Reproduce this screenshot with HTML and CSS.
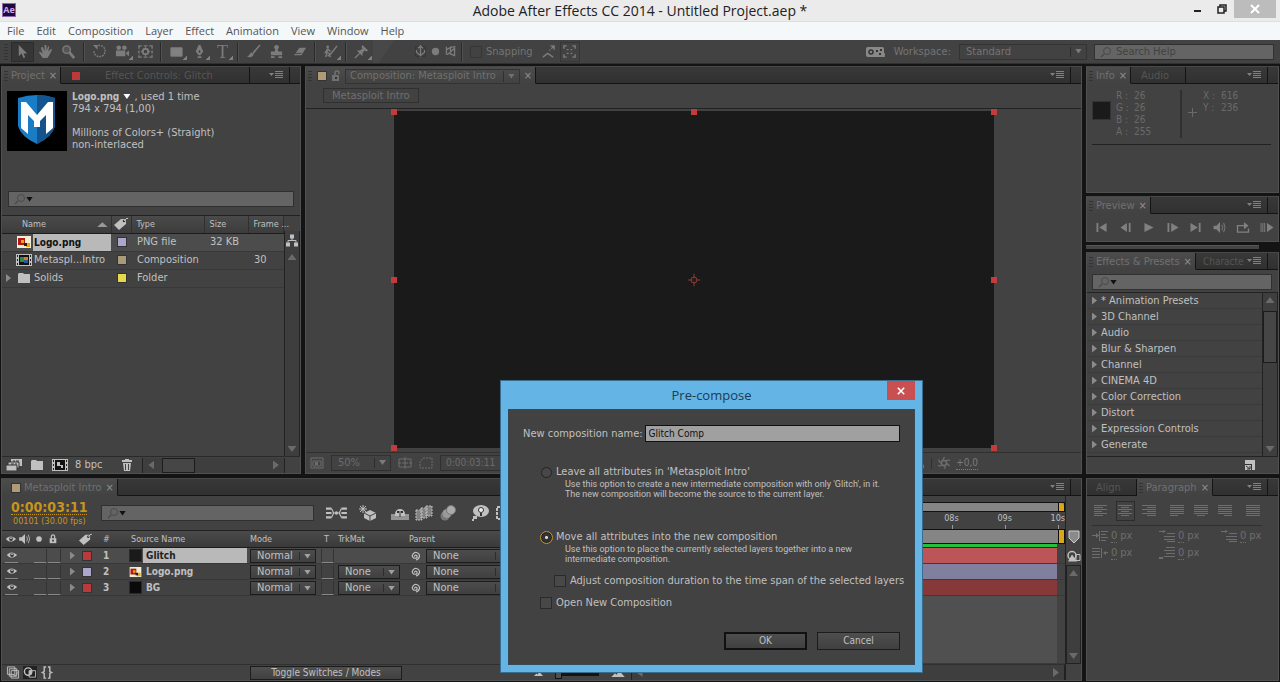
FILE: index.html
```
<!DOCTYPE html>
<html lang="en">
<head>
    <meta charset="UTF-8">
    <title>Adobe After Effects CC 2014 - Untitled Project.aep *</title>
    <link rel="stylesheet" href="styles.css">
</head>
<body>
    <svg class="defs" aria-hidden="true">
        <symbol id="arrow" viewBox="0 0 16 16"><path d="M4 1v12l3-3 2 5 2-1-2-4h4z"/></symbol>
        <symbol id="hand" viewBox="0 0 16 16"><path d="M5 15 1 9l1-1 3 2-2-6 2-1 2 5V1h2v6l2-5 1 1-1 5 3-3 1 1-3 6-2 3z"/></symbol>
        <symbol id="zoom" viewBox="0 0 16 16"><circle cx="6" cy="6" r="4" fill="#555" stroke="currentColor" stroke-width="1.5"/><path d="m9 9 5 6" stroke="currentColor" stroke-width="3"/></symbol>
        <symbol id="rotate" viewBox="0 0 16 16"><path d="M4 3a6 6 0 1 1-2 4" fill="none" stroke="currentColor" stroke-width="1.5" stroke-dasharray="2 1"/><path d="M1 1h5v5z"/></symbol>
        <symbol id="camera" viewBox="0 0 16 16"><circle cx="4" cy="4" r="2.5"/><circle cx="10" cy="4" r="2.5"/><path d="M1 7h10v6H1zm11 2 3-2v6l-3-2z"/></symbol>
        <symbol id="pan" viewBox="0 0 16 16"><path d="M1 5V2h3m2 0h4m2 0h3v3m0 2v3m0 2v2h-3m-2 0H6m-2 0H1v-2m0-2V7" fill="none" stroke="currentColor" stroke-width="1.5"/><circle cx="8" cy="8" r="3" fill="none" stroke="currentColor" stroke-width="2"/><path d="M8 3v3m0 4v3M3 8h3m4 0h3" stroke="currentColor"/></symbol>
        <symbol id="rect" viewBox="0 0 16 16"><path d="M2 4h12v9H2z" fill="#818181" stroke="currentColor"/></symbol>
        <symbol id="pen" viewBox="0 0 16 16"><path d="M7 1h2l3 7-3 4H7L4 8zM6 13h4v2H6z"/><circle cx="8" cy="8" r="1" fill="#333"/></symbol>
        <symbol id="brush" viewBox="0 0 16 16"><path d="m15 1-8 8 1 2zM6 9c-2 0-2 4-5 4 3 2 7 1 7-2z"/><path d="m15 1-7 8" stroke="currentColor" stroke-width="1.5"/></symbol>
        <symbol id="stamp" viewBox="0 0 16 16"><circle cx="8" cy="3.5" r="2.5"/><path d="M7 5h2l1 3h4v4H2V8h4zM2 13h4v2H2zm8 0h4v2h-4z"/></symbol>
        <symbol id="eraser" viewBox="0 0 16 16"><path d="M8 4h7l-5 8H2z"/><path d="M3 10h7" stroke="#444"/></symbol>
        <symbol id="roto" viewBox="0 0 16 16"><circle cx="5" cy="3" r="1.5"/><path d="m5 5-3 5m3-5 3 3M5 7l-2 7m3-5 2 5M15 2 8 11l-3 2" fill="none" stroke="currentColor" stroke-width="1.6"/></symbol>
        <symbol id="pin" viewBox="0 0 16 16"><path d="m9 1 6 6-2 1-2-1-2 3v3L3 7h3l3-2-1-2z"/><path d="m6 10-5 5" stroke="currentColor" stroke-width="1.5"/></symbol>
        <symbol id="axis" viewBox="0 0 16 16"><path d="M2 2h12v12H2z" fill="none" stroke="#333"/><path d="M8 1v13M3 6v3l5 4 5-4V6M5 4l3-3 3 3" fill="none" stroke="currentColor" stroke-width="1.5"/></symbol>
        <symbol id="ball" viewBox="0 0 16 16"><circle cx="8" cy="8" r="4.5"/></symbol>
        <symbol id="view" viewBox="0 0 16 16"><path d="M3 2v10m0-6 5-3v8l5 2V4L4 12M8 3l6-1" fill="none" stroke="currentColor" stroke-width="1.6"/></symbol>
        <symbol id="snap" viewBox="0 0 16 16"><path d="m2 14 5-4 6 4M9 7l1-1m1-1 3-3m-4 0h4v4" fill="none" stroke="currentColor" stroke-width="1.5"/></symbol>
        <symbol id="corners" viewBox="0 0 16 16"><path d="M2 5V2h3m6 0h3v3m0 6v3h-3m-6 0H2v-3M5 6h2m2 0h2M5 10h2m2 0h2" fill="none" stroke="currentColor" stroke-width="1.5"/></symbol>
        <symbol id="pad" viewBox="0 0 20 14"><rect x="1" y="2" width="18" height="10" rx="2"/><circle cx="6" cy="7" r="2" fill="none" stroke="#333" stroke-width="1.5"/><path d="M11 5h2v2h-2zm3 3h2v2h-2zm1-4h2v2h-2z" fill="#333"/></symbol>
        <symbol id="search" viewBox="0 0 12 12"><circle cx="7" cy="5" r="3.5" fill="none" stroke="currentColor"/><path d="m4 8-3 3" stroke="currentColor" stroke-width="1.5"/></symbol>
        <symbol id="list" viewBox="0 0 14 8"><path d="M0 2h5L2.500 5zM6 0h8v1H6zm0 2h8v1H6zm0 2h8v1H6zm0 2h8v1H6z"/></symbol>
        <symbol id="lock" viewBox="0 0 12 12"><path d="M2 5h8v6H2z"/><path d="M4 5V3a2 2 0 0 1 4 0v2" fill="none" stroke="currentColor" stroke-width="1.5"/><path d="M5 7h2v2H5z" fill="#333"/></symbol>
        <symbol id="unlock" viewBox="0 0 12 12"><path d="M2 5h7v6H2z"/><path d="M5 5V3a2 2 0 0 1 4 0v1" fill="none" stroke="currentColor" stroke-width="1.5"/><path d="M5 7h2v2H5z" fill="#333"/></symbol>
        <symbol id="tag" viewBox="0 0 16 14"><path d="m1 8 7-6h5v5l-7 6z"/><circle cx="11" cy="4" r="1.3" fill="#333"/><path d="m11 4 3-3 1 1" fill="none" stroke="currentColor"/></symbol>
        <symbol id="png" viewBox="0 0 14 12"><path fill="#f2ecd8" d="M0 0h14v12H0z"/><path fill="#b01c10" d="M1 2h7v7H1z"/><path fill="#e8a317" d="M4 4h3v3H4zm5 3h4v4H9z"/><path fill="#222" d="M7 7h3v3H7z"/></symbol>
        <symbol id="film" viewBox="0 0 16 12"><path d="M0 0h3v12H0zm13 0h3v12h-3zM3 0h10v1H3zm0 11h10v1H3z"/><path d="M1 1h1v2H1zm0 4h1v2H1zm0 4h1v2H1zm13-8h1v2h-1zm0 4h1v2h-1zm0 4h1v2h-1z" fill="#222"/><path fill="#111" d="M3 1h10v10H3z"/></symbol>
        <symbol id="folder" viewBox="0 0 14 12"><path d="M1 2 2 1h4l1 1h6v9H1z"/></symbol>
        <symbol id="tree" viewBox="0 0 14 14"><path d="M5 1h4v4H5zM1 9h4v4H1zm8 0h4v4H9z"/><path d="M7 4v3M3 9V7h8v2" fill="none" stroke="currentColor"/></symbol>
        <symbol id="footage" viewBox="0 0 16 12"><path d="M5 0h11v7H5z"/><path d="M2 3h11v6H2z" stroke="#333"/><path d="M0 6h11v6H0z" stroke="#333"/><path d="M7 2h2m1 0h3M5 5h3m1 0h2" stroke="#333"/></symbol>
        <symbol id="trash" viewBox="0 0 12 14"><path d="M1 2h10v2H1zm3-1h4v1H4zM2 5h8l-1 8H3z"/><path d="M4.500 6v6m3-6v6" stroke="#444"/></symbol>
        <symbol id="eye" viewBox="0 0 14 10"><path d="M1 5c3-4 8-4 12 0-4 4-9 4-12 0z"/><circle cx="7" cy="5" r="2.2" fill="#333"/><circle cx="7" cy="4" r="1"/></symbol>
        <symbol id="speaker" viewBox="0 0 14 12"><path d="M0 4h3l4-4v12L3 8H0z"/><path d="M9 3q2 3 0 6m2-8q3 5 0 10" fill="none" stroke="currentColor"/></symbol>
        <symbol id="spiral" viewBox="0 0 12 12"><path d="M6 6.500c-1-1 1-2 2-.5 1 2-2 3-4 1.500C2 5 5 2 7.500 2.500 12 4 11 9 7 10" fill="none" stroke="currentColor" stroke-width="1.2"/></symbol>
        <symbol id="flow" viewBox="0 0 20 14"><path d="M0 2h5v2H0zm0 4h5v2H0zm0 4h5v2H0zm14-8h5v2h-5zm0 4h5v2h-5zm0 4h5v2h-5z"/><path d="m5 3 2 4-2 4M6 7h7m1-4-2 4 2 4" fill="none" stroke="currentColor"/><circle cx="9.500" cy="7" r="1.5"/></symbol>
        <symbol id="cube" viewBox="0 0 18 16"><path d="m11 5 6 3v5l-6 3-6-3V8z"/><path d="M4 0v8M0 4h8M1 1l6 6m0-6L1 7" stroke="currentColor"/><path d="m5 8 6 3 6-3m-6 3v5" fill="none" stroke="#444"/></symbol>
        <symbol id="shy" viewBox="0 0 18 14"><path d="M0 8h18v6H0z" opacity=".65"/><path d="M4 8a5 5 0 0 1 10 0v2H4z"/><path d="M6 5h2v2H6zm4 0h2v2h-2zM8.500 5h1v6h-1z" fill="#333"/></symbol>
        <symbol id="blend" viewBox="0 0 18 16"><path d="M1 5h6v10H1zm5-2h6v10H6zm5-2h6v10h-6z" opacity=".5"/><path d="M1 5h6v10H1zm5-2h6v10H6zm5-2h6v10h-6z" fill="none" stroke="currentColor" stroke-dasharray="2 1"/></symbol>
        <symbol id="blur" viewBox="0 0 18 16"><circle cx="6" cy="11" r="4.5" fill="#777"/><circle cx="8" cy="8.500" r="4.5" fill="#999"/><circle cx="12" cy="5" r="4.5" fill="#aaa" stroke="#777"/></symbol>
        <symbol id="brain" viewBox="0 0 18 16"><ellipse cx="10" cy="6" rx="8" ry="6"/><path d="M2 11h4v3H2zm-1 3h2v2H1z"/><circle cx="10" cy="5" r="2.5" fill="#eee" stroke="#333"/><path d="M9 8h2v3H9z" fill="#333"/></symbol>
        <symbol id="graph" viewBox="0 0 18 16"><path d="M2 2h14v12H2z" fill="none" stroke="currentColor" stroke-dasharray="3 1" stroke-width="2"/></symbol>
        <symbol id="monitor" viewBox="0 0 14 12"><path d="M1 1h12v10H1z" fill="none" stroke="currentColor"/><path d="M3 4h8v5H3z" fill="none" stroke="currentColor"/><path d="M5 5h3v3H5z"/></symbol>
        <symbol id="grid" viewBox="0 0 14 12"><path d="M1 2h12v8H1zM7 0v12M4 6h6M0 6h3m8 0h3" fill="none" stroke="currentColor"/></symbol>
        <symbol id="region" viewBox="0 0 14 12"><path d="M4 1h9v10H1V5z" fill="none" stroke="currentColor" stroke-dasharray="2 1"/></symbol>
        <symbol id="aperture" viewBox="0 0 14 14"><circle cx="7" cy="7" r="3" fill="none" stroke="currentColor" stroke-width="2"/><path d="M6 4q0-3 2-4m1 5q2-2 5-1m-4 4q3 0 3 3m-5-1q1 2-1 4m-2-5q-2 2-5 1m4-3Q1 6 1 3" fill="none" stroke="currentColor" stroke-width="1.5"/></symbol>
        <symbol id="first" viewBox="0 0 14 12"><path d="M1 1h2v10H1zm11 0v10L4 6z"/></symbol>
        <symbol id="prev" viewBox="0 0 14 12"><path d="M8 1v10L1 6zm2 0h2v10h-2z"/></symbol>
        <symbol id="play" viewBox="0 0 14 12"><path d="M2 1v10l10-5z"/></symbol>
        <symbol id="next" viewBox="0 0 14 12"><path d="M1 1h2v10H1zm4 0v10l8-5z"/></symbol>
        <symbol id="last" viewBox="0 0 14 12"><path d="M1 1v10l8-5zm9 0h2v10h-2z"/></symbol>
        <symbol id="loop" viewBox="0 0 14 12"><path d="M3 4H1v7h12V7M3 4h6" fill="none" stroke="currentColor" stroke-width="1.5"/><path d="m8 0 5 4-5 4z"/></symbol>
        <symbol id="ram" viewBox="0 0 14 12"><path d="M0 1h1v10H0zm2 0h1v10H2zm2 0h1v10H4zm3 0v10l7-5z"/></symbol>
        <symbol id="newbin" viewBox="0 0 12 12"><path d="M1 1h10v10H1z"/><path d="M1 5h6v1H1zm6 0h1v6H7z" fill="#333"/><path d="m2 7 4 3M6 7v3H3" fill="none" stroke="#333"/></symbol>
        <symbol id="left" viewBox="0 0 14 12"><path d="M0 0h13v1H0zm0 2h9v1H0zm0 2h13v1H0zm0 2h8v1H0zm0 2h13v1H0zm0 2h9v1H0z"/></symbol>
        <symbol id="center" viewBox="0 0 14 12"><path d="M0 0h14v1H0zm3 2h8v1H3zM0 4h14v1H0zm3 2h8v1H3zM0 8h14v1H0zm3 2h8v1H3z"/></symbol>
        <symbol id="right" viewBox="0 0 14 12"><path d="M0 0h14v1H0zm5 2h9v1H5zM0 4h14v1H0zm5 2h9v1H5zM0 8h14v1H0zm5 2h9v1H5z"/></symbol>
        <symbol id="last-left" viewBox="0 0 14 12"><path d="M0 0h14v1H0zm0 2h14v1H0zm0 2h14v1H0zm0 2h14v1H0zm0 2h14v1H0zm0 2h8v1H0z"/></symbol>
        <symbol id="last-center" viewBox="0 0 14 12"><path d="M0 0h14v1H0zm0 2h14v1H0zm0 2h14v1H0zm0 2h14v1H0zm0 2h14v1H0zm3 2h8v1H3z"/></symbol>
        <symbol id="last-right" viewBox="0 0 14 12"><path d="M0 0h14v1H0zm0 2h14v1H0zm0 2h14v1H0zm0 2h14v1H0zm0 2h14v1H0zm6 2h8v1H6z"/></symbol>
        <symbol id="full" viewBox="0 0 14 12"><path d="M0 0h14v1H0zm0 2h14v1H0zm0 2h14v1H0zm0 2h14v1H0zm0 2h14v1H0zm0 2h14v1H0z"/></symbol>
        <symbol id="indent" viewBox="0 0 16 12"><path d="M0 5h5v1H0zm4-2 3 2.500L4 8zM7 1h1v10H7zm2 0h7v1H9zm0 3h5v1H9zm0 3h7v1H9zm0 3h5v1H9z"/></symbol>
        <symbol id="outdent" viewBox="0 0 16 12"><path d="M0 1h8v1H0zm0 3h8v1H0zm0 3h8v1H0zm0 3h8v1H0zM9 1h1v10H9zm2 5 3-2v4zm2-1h3v1h-3z"/></symbol>
        <symbol id="before" viewBox="0 0 16 12"><path d="M0 1h5v1H0zm4-1 3 1.500L4 3zM8 3h8v1H8zM5 6h11v1H5zm0 3h11v1H5zm3 2h8v1H8z"/></symbol>
        <symbol id="after" viewBox="0 0 16 12"><path d="M7 0h9v1H7zM5 3h11v1H5zm2 3h9v1H7zM5 9h11v1H5zm-5 1h4v2H0z"/></symbol>
        <symbol id="layers" viewBox="0 0 14 14"><path d="M1 1h8v8H1zm2 2h8v8H3zm2 2h8v8H5z" fill="#444" stroke="currentColor"/><path d="m7 9 2 2 3-4" fill="none" stroke="currentColor"/></symbol>
        <symbol id="modes" viewBox="0 0 14 14"><circle cx="5" cy="6" r="4" fill="none" stroke="currentColor" stroke-width="1.5"/><path d="M6 5h7v7H6z" fill="none" stroke="currentColor"/><path d="M6 5h3v4H6z"/></symbol>
        <symbol id="braces" viewBox="0 0 14 14"><path d="M6 1H4v5L2 7l2 1v5h2M8 1h2v5l2 1-2 1v5H8" fill="none" stroke="currentColor" stroke-width="1.5"/></symbol>
        <symbol id="marker" viewBox="0 0 12 14"><path d="M1 1h10v7l-5 5-5-5z" stroke="#ccc"/></symbol>
        <symbol id="compbtn" viewBox="0 0 14 12"><circle cx="5" cy="5" r="4" fill="none" stroke="currentColor" stroke-width="1.5"/><path d="m5 4 5 7H1z"/><path d="M9 4h4v6H9z" fill="none" stroke="currentColor"/></symbol>
        <symbol id="hills" viewBox="0 0 18 8"><path d="m0 8 5-5 2 2 4-5 7 8z"/></symbol>
    </svg>

    <header class="titlebar">
        <span class="app-icon">Ae</span>
        <h1>Adobe After Effects CC 2014 - Untitled Project.aep *</h1>
        <div class="window-buttons">
            <button aria-label="Minimize"><svg viewBox="0 0 10 10"><path d="M1 6h7v2H1z"/></svg></button>
            <button aria-label="Restore"><svg viewBox="0 0 10 10"><path d="M1 3h6v6H1zM3 3V1h6v6H7" fill="none" stroke="currentColor" stroke-width="1.5"/></svg></button>
            <button class="close" aria-label="Close"><svg viewBox="0 0 10 10"><path d="m1 1 8 8m0-8L1 9" stroke="currentColor" stroke-width="2"/></svg></button>
        </div>
    </header>

    <nav class="menubar">
        <a href="#">File</a><a href="#">Edit</a><a href="#">Composition</a><a href="#">Layer</a><a href="#">Effect</a><a href="#">Animation</a><a href="#">View</a><a href="#">Window</a><a href="#">Help</a>
    </nav>

    <div class="toolbar">
        <span class="grip"></span>
        <button class="tool on" aria-label="Selection"><svg><use href="#arrow"/></svg></button>
        <button class="tool" aria-label="Hand"><svg><use href="#hand"/></svg></button>
        <button class="tool" aria-label="Zoom"><svg><use href="#zoom"/></svg></button>
        <i class="sep"></i>
        <button class="tool" aria-label="Rotation"><svg><use href="#rotate"/></svg></button>
        <button class="tool more" aria-label="Camera"><svg><use href="#camera"/></svg></button>
        <button class="tool" aria-label="Pan behind"><svg><use href="#pan"/></svg></button>
        <i class="sep"></i>
        <button class="tool more" aria-label="Rectangle"><svg><use href="#rect"/></svg></button>
        <button class="tool more" aria-label="Pen"><svg><use href="#pen"/></svg></button>
        <button class="tool more type">T</button>
        <i class="sep"></i>
        <button class="tool" aria-label="Brush"><svg><use href="#brush"/></svg></button>
        <button class="tool" aria-label="Clone stamp"><svg><use href="#stamp"/></svg></button>
        <button class="tool" aria-label="Eraser"><svg><use href="#eraser"/></svg></button>
        <i class="sep"></i>
        <button class="tool more" aria-label="Roto brush"><svg><use href="#roto"/></svg></button>
        <i class="sep"></i>
        <button class="tool more" aria-label="Puppet pin"><svg><use href="#pin"/></svg></button>
        <i class="slant"></i>
        <button class="tool small" aria-label="Local axis"><svg><use href="#axis"/></svg></button>
        <button class="tool small" aria-label="World axis"><svg><use href="#ball"/></svg></button>
        <button class="tool small" aria-label="View axis"><svg><use href="#view"/></svg></button>
        <i class="sep"></i>
        <label class="snapping"><input type="checkbox"> Snapping</label>
        <button class="tool" aria-label="Snap edges"><svg><use href="#snap"/></svg></button>
        <button class="tool box" aria-label="Snap bounds"><svg><use href="#corners"/></svg></button>
        <div class="workspace-pick">
            <svg class="pad more"><use href="#pad"/></svg>
            <label for="ws">Workspace:</label>
            <span class="select"><select id="ws"><option>Standard</option></select></span>
        </div>
        <div class="search help"><svg><use href="#search"/></svg><input type="text" placeholder="Search Help" aria-label="Search Help"></div>
    </div>

    <main class="workspace">
        <section class="panel project">
            <div class="tabs">
                <button class="tab active"><i class="grip"></i>Project <b>×</b></button>
                <button class="tab effect-tab"><i class="swatch red"></i>Effect Controls: Glitch</button>
                <button class="panel-menu" aria-label="Panel menu"><svg><use href="#list"/></svg></button>
                <i class="end"></i>
            </div>
            <div class="preview-info">
                <svg class="thumb" viewBox="0 0 60 60"><path fill="#000" d="M0 0h60v60H0z"/><path fill="#1a7cc4" d="M11 7q19-6 37 0v28q-3 11-18 18-16-7-19-18z"/><path fill="#14548e" d="M30 4q10 0 18 3v28q-3 11-18 18z"/><path fill="#fff" d="M14 11h5l11 13 11-13h5v26l-7 6V24l-6 6v6h-6v-6l-6-6v19l-7-6z"/></svg>
                <div>
                    <p><strong>Logo.png</strong> <i class="down"></i> , used 1 time</p>
                    <p>794 x 794 (1,00)</p>
                    <p>&nbsp;</p>
                    <p>Millions of Colors+ (Straight)</p>
                    <p>non-interlaced</p>
                </div>
            </div>
            <div class="search"><svg><use href="#search"/></svg><i class="down"></i><input type="text" aria-label="Search project"></div>
            <div class="files">
                <table>
                    <thead>
                        <tr><th class="c-name">Name<i class="up"></i></th><th class="c-tag"><svg><use href="#tag"/></svg></th><th class="c-type">Type</th><th class="c-size">Size</th><th>Frame ...</th></tr>
                    </thead>
                    <tbody>
                        <tr class="on"><td class="c-name"><div><i class="twirl none"></i><svg><use href="#png"/></svg><span>Logo.png</span></div></td><td><i class="swatch lavender"></i></td><td>PNG file</td><td>32 KB</td><td></td></tr>
                        <tr><td class="c-name"><div><i class="twirl none"></i><svg viewBox="0 0 16 12"><use href="#film"/><path fill="#2c8a50" d="M4 3h5v5H4z"/><path fill="#d08030" d="M8 3h4v3H8z"/><path fill="#2c5aa0" d="M8 6h4v3H8z"/></svg><span>Metaspl...Intro</span></div></td><td><i class="swatch sand"></i></td><td>Composition</td><td></td><td>30</td></tr>
                        <tr><td class="c-name"><div><i class="twirl"></i><svg><use href="#folder"/></svg><span>Solids</span></div></td><td><i class="swatch yellow"></i></td><td>Folder</td><td></td><td></td></tr>
                    </tbody>
                </table>
                <div class="vscroll"><svg class="tree"><use href="#tree"/></svg><i class="up"></i><span></span><i class="down"></i></div>
            </div>
            <div class="project-foot">
                <svg><use href="#footage"/></svg>
                <svg><use href="#folder"/></svg>
                <svg viewBox="0 0 16 12"><use href="#film"/><path d="M5 3h3v3h3v3H9V7H5z"/></svg>
                <span>8 bpc</span>
                <svg class="trash"><use href="#trash"/></svg>
                <div class="hscroll"><i class="back"></i><b></b><i class="twirl"></i></div>
            </div>
        </section>

        <section class="panel comp">
            <div class="tabs">
                <div class="tab active"><i class="grip"></i><i class="swatch tan"></i><svg class="unlock"><use href="#unlock"/></svg><button class="comp-pick">Composition: Metasploit Intro<i class="line"></i><i class="down"></i></button><b>×</b></div>
                <button class="panel-menu" aria-label="Panel menu"><svg><use href="#list"/></svg></button>
                <i class="end"></i>
            </div>
            <div class="crumb"><button>Metasploit Intro</button></div>
            <div class="viewer">
                <div class="canvas">
                    <i class="handle nw"></i><i class="handle n"></i><i class="handle ne"></i><i class="handle w"></i><i class="handle e"></i><i class="handle sw"></i><i class="handle se"></i>
                    <svg class="anchor" viewBox="0 0 13 13"><circle cx="6.500" cy="6.500" r="3" fill="none" stroke="#8c3a36"/><path d="M6.500 0v5m0 3v5M0 6.500h5m3 0h5" stroke="#8c3a36"/></svg>
                </div>
            </div>
            <div class="comp-foot">
                <svg><use href="#monitor"/></svg>
                <span class="select"><select aria-label="Magnification"><option>50%</option></select></span>
                <svg><use href="#grid"/></svg>
                <svg><use href="#region"/></svg>
                <button class="time">0:00:03:11</button>
                <div class="exposure"><svg><use href="#tree"/></svg><i class="line"></i><svg><use href="#aperture"/></svg><a href="#">+0,0</a></div>
            </div>
        </section>

        <aside class="side">
            <section class="panel info">
                <div class="tabs">
                    <button class="tab active"><i class="grip"></i>Info <b>×</b></button>
                    <button class="tab audio-tab">Audio</button>
                    <button class="panel-menu" aria-label="Panel menu"><svg><use href="#list"/></svg></button>
                    <i class="end"></i>
                </div>
                <div class="readout">
                    <i class="pixel"></i>
                    <dl><dt>R :</dt><dd>26</dd><dt>G :</dt><dd>26</dd><dt>B :</dt><dd>26</dd><dt>A :</dt><dd>255</dd></dl>
                    <svg class="cross" viewBox="0 0 9 9"><path d="M4 0h1v9H4zM0 4h9v1H0z"/></svg>
                    <dl class="xy"><dt>X :</dt><dd>616</dd><dt>Y :</dt><dd>236</dd></dl>
                </div>
            </section>
            <section class="panel">
                <div class="tabs">
                    <button class="tab active"><i class="grip"></i>Preview <b>×</b></button>
                    <button class="panel-menu" aria-label="Panel menu"><svg><use href="#list"/></svg></button>
                    <i class="end"></i>
                </div>
                <div class="transport">
                    <button aria-label="First frame"><svg><use href="#first"/></svg></button>
                    <button aria-label="Previous frame"><svg><use href="#prev"/></svg></button>
                    <button aria-label="Play"><svg><use href="#play"/></svg></button>
                    <button aria-label="Next frame"><svg><use href="#next"/></svg></button>
                    <button aria-label="Last frame"><svg><use href="#last"/></svg></button>
                    <button aria-label="Mute"><svg><use href="#speaker"/></svg></button>
                    <button aria-label="Loop"><svg><use href="#loop"/></svg></button>
                    <button aria-label="RAM preview"><svg><use href="#ram"/></svg></button>
                </div>
            </section>
            <div class="sliver"></div>
            <section class="panel effects">
                <div class="tabs">
                    <button class="tab active"><i class="grip"></i>Effects &amp; Presets <b>×</b></button>
                    <button class="tab character-tab">Characte</button>
                    <button class="panel-menu" aria-label="Panel menu"><svg><use href="#list"/></svg></button>
                    <i class="end"></i>
                </div>
                <div class="search"><svg><use href="#search"/></svg><i class="down"></i><input type="text" aria-label="Search effects"></div>
                <div class="effect-list">
                    <ul>
                        <li><i class="twirl"></i>* Animation Presets</li>
                        <li><i class="twirl"></i>3D Channel</li>
                        <li><i class="twirl"></i>Audio</li>
                        <li><i class="twirl"></i>Blur &amp; Sharpen</li>
                        <li><i class="twirl"></i>Channel</li>
                        <li><i class="twirl"></i>CINEMA 4D</li>
                        <li><i class="twirl"></i>Color Correction</li>
                        <li><i class="twirl"></i>Distort</li>
                        <li><i class="twirl"></i>Expression Controls</li>
                        <li><i class="twirl"></i>Generate</li>
                    </ul>
                    <div class="vscroll"><i class="up"></i><b></b><span></span><i class="down"></i></div>
                </div>
                <div class="effects-foot"><svg><use href="#newbin"/></svg></div>
            </section>
        </aside>

        <section class="panel timeline">
            <div class="tabs">
                <button class="tab active"><i class="swatch tan"></i>Metasploit Intro <b>×</b></button>
                <button class="panel-menu" aria-label="Panel menu"><svg><use href="#list"/></svg></button>
                <i class="end"></i>
            </div>
            <div class="timeline-body">
                <div class="layers">
                    <div class="layers-top">
                        <div class="clock"><strong>0:00:03:11</strong><small>00101 (30.00 fps)</small></div>
                        <div class="search"><svg><use href="#search"/></svg><i class="down"></i><input type="text" aria-label="Search layers"></div>
                        <div class="switches">
                            <svg><use href="#flow"/></svg><svg><use href="#cube"/></svg><svg><use href="#shy"/></svg><svg><use href="#blend"/></svg><svg><use href="#blur"/></svg><svg><use href="#brain"/></svg><svg><use href="#graph"/></svg>
                        </div>
                    </div>
                    <div class="row head">
                        <span class="av"><svg><use href="#eye"/></svg><svg><use href="#speaker"/></svg><svg><use href="#ball"/></svg><svg><use href="#lock"/></svg></span>
                        <span class="tagcol"><svg><use href="#tag"/></svg></span>
                        <span>#</span><span class="src">Source Name</span><span>Mode</span><span class="t">T</span><span>TrkMat</span><span class="parent">Parent</span>
                    </div>
                    <div class="row on">
                        <span class="av"><i class="cell"><svg><use href="#eye"/></svg></i><i class="cell solo"></i><i class="cell"></i></span>
                        <span class="tagcol"><i class="twirl"></i><i class="swatch red"></i></span>
                        <b>1</b><span class="src"><i class="solid"></i><strong>Glitch</strong></span>
                        <span class="select"><select aria-label="Mode"><option>Normal</option></select></span>
                        <i class="cell t"></i><span></span>
                        <span class="parent"><svg><use href="#spiral"/></svg><span class="select"><select aria-label="Parent"><option>None</option></select></span></span>
                    </div>
                    <div class="row">
                        <span class="av"><i class="cell"><svg><use href="#eye"/></svg></i><i class="cell solo"></i><i class="cell"></i></span>
                        <span class="tagcol"><i class="twirl"></i><i class="swatch lavender"></i></span>
                        <b>2</b><span class="src"><svg><use href="#png"/></svg><strong>Logo.png</strong></span>
                        <span class="select"><select aria-label="Mode"><option>Normal</option></select></span>
                        <i class="cell t"></i>
                        <span class="select"><select aria-label="Track matte"><option>None</option></select></span>
                        <span class="parent"><svg><use href="#spiral"/></svg><span class="select"><select aria-label="Parent"><option>None</option></select></span></span>
                    </div>
                    <div class="row">
                        <span class="av"><i class="cell"><svg><use href="#eye"/></svg></i><i class="cell solo"></i><i class="cell"></i></span>
                        <span class="tagcol"><i class="twirl"></i><i class="swatch red"></i></span>
                        <b>3</b><span class="src"><i class="solid black"></i><strong>BG</strong></span>
                        <span class="select"><select aria-label="Mode"><option>Normal</option></select></span>
                        <i class="cell t"></i>
                        <span class="select"><select aria-label="Track matte"><option>None</option></select></span>
                        <span class="parent"><svg><use href="#spiral"/></svg><span class="select"><select aria-label="Parent"><option>None</option></select></span></span>
                    </div>
                    <div class="layers-foot">
                        <svg><use href="#layers"/></svg><svg class="pressed"><use href="#modes"/></svg><svg><use href="#braces"/></svg>
                        <button>Toggle Switches / Modes</button>
                    </div>
                </div>
                <div class="graph">
                    <div class="navigator"><i></i></div>
                    <div class="ruler"><span>01s</span><span>02s</span><span>03s</span><span>04s</span><span>05s</span><span>06s</span><span>07s</span><span>08s</span><span>09s</span><span>10s</span></div>
                    <div class="work-area"><i></i></div>
                    <div class="cached"></div>
                    <div class="lane"><i class="bar glitch"></i></div>
                    <div class="lane"><i class="bar logo"></i></div>
                    <div class="lane"><i class="bar bg"></i></div>
                    <div class="lane rest"><i class="bar"></i></div>
                    <div class="graph-foot">
                        <svg class="near"><use href="#hills"/></svg><input type="range" min="0" max="10" value="0" aria-label="Zoom"><svg><use href="#hills"/></svg>
                        <div class="hscroll"><i class="back"></i><span></span><i class="twirl"></i></div>
                    </div>
                </div>
                <div class="gutter">
                    <svg class="mark"><use href="#marker"/></svg>
                    <svg><use href="#compbtn"/></svg>
                    <div class="vscroll"><i class="up"></i><span></span><i class="down"></i></div>
                </div>
            </div>
        </section>

        <section class="panel paragraph">
            <div class="tabs">
                <button class="tab align-tab">Align</button>
                <button class="tab active"><i class="grip"></i>Paragraph <b>×</b></button>
                <button class="panel-menu" aria-label="Panel menu"><svg><use href="#list"/></svg></button>
                <i class="end"></i>
            </div>
            <div class="aligns">
                <button aria-label="Left"><svg><use href="#left"/></svg></button>
                <button class="on" aria-label="Center"><svg><use href="#center"/></svg></button>
                <button aria-label="Right"><svg><use href="#right"/></svg></button>
                <button aria-label="Justify last left"><svg><use href="#last-left"/></svg></button>
                <button aria-label="Justify last center"><svg><use href="#last-center"/></svg></button>
                <button aria-label="Justify last right"><svg><use href="#last-right"/></svg></button>
                <button aria-label="Justify all"><svg><use href="#full"/></svg></button>
            </div>
            <div class="indents">
                <span><svg><use href="#indent"/></svg><u>0</u> px</span>
                <span><svg><use href="#before"/></svg><u>0</u> px</span>
                <span><svg><use href="#before"/></svg><u>0</u> px</span>
                <span><svg><use href="#outdent"/></svg><u>0</u> px</span>
                <span><svg><use href="#after"/></svg><u>0</u> px</span>
            </div>
        </section>
    </main>

    <form class="dialog" role="dialog" aria-label="Pre-compose">
        <div class="dialog-title">
            <h2>Pre-compose</h2>
            <button type="button" class="dialog-close" aria-label="Close"><svg viewBox="0 0 10 10"><path d="m1 1 8 8m0-8L1 9" stroke="currentColor" stroke-width="2"/></svg></button>
        </div>
        <div class="dialog-body">
            <div class="name-row">
                <label for="comp-name">New composition name:</label>
                <input type="text" id="comp-name" value="Glitch Comp">
            </div>
            <div class="choice">
                <label><input type="radio" name="attrs"> Leave all attributes in 'Metasploit Intro'</label>
                <p>Use this option to create a new intermediate composition with only 'Glitch', in it.<br>The new composition will become the source to the current layer.</p>
            </div>
            <div class="choice second">
                <label><input type="radio" name="attrs" checked> Move all attributes into the new composition</label>
                <p>Use this option to place the currently selected layers together into a new<br>intermediate composition.</p>
            </div>
            <label class="adjust"><input type="checkbox"> Adjust composition duration to the time span of the selected layers</label>
            <label class="open-new"><input type="checkbox"> Open New Composition</label>
            <div class="dialog-buttons">
                <button type="button" class="ok">OK</button>
                <button type="button">Cancel</button>
            </div>
        </div>
    </form>
</body>
</html>
```
FILE: styles.css
```
* {
    box-sizing: border-box;
}
body {
    margin: 0;
    height: 100vh;
    min-height: 600px;
    display: flex;
    flex-direction: column;
    overflow: hidden;
    background: #141414;
    color: #c0c0c0;
    font-family: "DejaVu Sans Condensed", "DejaVu Sans", sans-serif;
    font-stretch: condensed;
    font-size: 11px;
    line-height: 12px;
}
h1, h2, p, ul, dl, dd {
    margin: 0;
    padding: 0;
    font-weight: normal;
}
button, input, select {
    font: inherit;
    color: inherit;
    margin: 0;
    padding: 0;
    border: 0;
    border-radius: 0;
    background: none;
    appearance: none;
}
svg {
    width: 16px;
    height: 16px;
    fill: currentColor;
    display: block;
    flex: none;
}
i {
    font-style: normal;
}
strong {
    font-size: 10px;
}
.defs {
    position: absolute;
    width: 0;
    height: 0;
}

/* title and menu */
.titlebar {
    display: flex;
    justify-content: space-between;
    height: 22px;
    flex: none;
    background: #ebebeb;
    border-bottom: 1px solid #dcdfe0;
    color: #222;
    font-family: "Open Sans", sans-serif;
    font-stretch: normal;
}
.app-icon {
    width: 14px;
    height: 14px;
    margin: 3px 0 0 2px;
    background: #20093c;
    border: 1px solid #8a6ab0;
    color: #cfa8f5;
    font-size: 9px;
    line-height: 12px;
    font-weight: bold;
    text-align: center;
}
.titlebar h1 {
    flex: 1;
    padding-left: 78px;
    text-align: center;
    font-size: 14px;
    line-height: 22px;
}
.window-buttons {
    display: flex;
    width: 94px;
}
.window-buttons button {
    width: 24px;
    height: 18px;
    display: grid;
    place-items: center;
}
.window-buttons svg {
    width: 10px;
    height: 10px;
}
.window-buttons .close {
    width: 42px;
    background: #bcbcbc;
    color: #fff;
}
.menubar {
    display: flex;
    gap: 12px;
    height: 18px;
    flex: none;
    padding-left: 7px;
    background: #f4f8f9;
    font: 11px/18px "Open Sans", sans-serif;
}
.menubar a {
    color: #555;
    text-decoration: none;
}

/* toolbar */
.toolbar {
    display: flex;
    align-items: center;
    height: 24px;
    flex: none;
    padding: 0 6px 0 4px;
    background: #424242;
    border-bottom: 1px solid #303030;
    color: #747474;
}
.grip {
    flex: none;
    width: 4px;
    height: 11px;
    background: repeating-linear-gradient(#333 0 1px, transparent 1px 3px);
}
.toolbar > .grip {
    height: 16px;
    margin-right: 3px;
}
.tool {
    width: 23px;
    height: 20px;
    display: grid;
    place-items: center;
    color: #7c7c7c;
}
.tool.on {
    background: #363636;
    border: 1px solid #2c2c2c;
}
.tool svg {
    width: 15px;
    height: 15px;
}
.tool.small {
    width: 15px;
}
.tool.small svg {
    width: 13px;
    height: 13px;
}
.tool.box {
    width: 20px;
    border: 1px solid #363636;
}
.tool.type {
    font: 18px/18px "Liberation Serif", serif;
}
.more {
    background: linear-gradient(135deg, transparent 50%, #808080 50%) right 1px bottom 2px / 4px 4px no-repeat;
}
.sep {
    width: 2px;
    height: 20px;
    margin: 0 3px;
    background: #2a2a2a;
    border-right: 1px solid #505050;
    flex: none;
}
.slant {
    width: 26px;
    height: 23px;
    margin-right: 14px;
    background: linear-gradient(125deg, #484848 50%, #424242 52%);
}
.snapping {
    display: flex;
    align-items: center;
    gap: 4px;
    margin: 0 4px;
}
input[type="checkbox"] {
    flex: none;
    width: 12px;
    height: 12px;
    border: 1px solid #2a2a2a;
    background: #484848;
}
.snapping input[type="checkbox"] {
    border-color: #363636;
    background: none;
}
.workspace-pick {
    display: flex;
    align-items: center;
    gap: 8px;
    margin-left: auto;
}
.pad {
    width: 22px;
    height: 14px;
    color: #888;
}
.select {
    position: relative;
    display: flex;
    height: 14px;
    border: 1px solid #1c1c1c;
    background: linear-gradient(#4c4c4c, #404040);
}
.select select {
    width: 100%;
    padding-left: 6px;
    line-height: 12px;
}
.select::after {
    content: "";
    position: absolute;
    right: 4px;
    top: 4px;
    width: 7px;
    height: 5px;
    background: #a0a0a0;
    clip-path: polygon(0 0, 100% 0, 50% 100%);
    pointer-events: none;
}
.select::before {
    content: "";
    position: absolute;
    right: 15px;
    top: 2px;
    bottom: 2px;
    border-left: 1px solid #2c2c2c;
}
.workspace-pick .select {
    width: 128px;
    height: 16px;
    border-color: #333;
    background: #424242;
}
.workspace-pick .select::after, .comp-foot .select::after {
    background: #7a7a7a;
}
.search {
    display: flex;
    align-items: center;
    height: 16px;
    padding-left: 5px;
    background: #646464;
    border: 1px solid #303030;
}
.search svg {
    width: 12px;
    height: 12px;
    color: #4a4a4a;
}
.search input {
    flex: 1;
    min-width: 0;
}
.search.help {
    width: 180px;
    margin-left: 7px;
}
.search.help input {
    padding-left: 4px;
}
.search.help input::placeholder {
    color: #424242;
}

/* small triangles */
.down, .up, .twirl, .back {
    display: inline-block;
    flex: none;
    width: 7px;
    height: 5px;
    background: currentColor;
}
.down {
    clip-path: polygon(0 0, 100% 0, 50% 100%);
}
.up {
    clip-path: polygon(50% 0, 100% 100%, 0 100%);
}
.twirl {
    width: 5px;
    height: 8px;
    background: #8a8a8a;
    clip-path: polygon(0 0, 100% 50%, 0 100%);
}
.twirl.none {
    visibility: hidden;
}
.back {
    width: 6px;
    height: 9px;
    background: #6a6a6a;
    clip-path: polygon(100% 0, 100% 100%, 0 50%);
}
.search .down {
    color: #111;
}

/* panels */
.workspace {
    flex: 1;
    min-height: 0;
    display: grid;
    grid-template-columns: 300px 1fr 193px;
    grid-template-rows: 1fr 203px;
    gap: 4px;
    padding: 2px 1px 1px;
}
.panel {
    display: flex;
    flex-direction: column;
    min-width: 0;
    min-height: 0;
    background: #424242;
    border: 1px solid #505050;
    border-top-color: #484848;
}
.tabs {
    display: flex;
    height: 17px;
    flex: none;
    background: linear-gradient(#383838, #303030);
    color: #6c6c6c;
}
.tab {
    display: flex;
    align-items: center;
    gap: 3px;
    padding: 2px 3px 0 2px;
    border-right: 1px solid #141414;
    border-bottom: 1px solid #141414;
    color: #555;
    white-space: nowrap;
}
.tab.active {
    background: linear-gradient(#4c4c4c, #424242);
    border-bottom-color: #424242;
    color: #707070;
}
.tab b {
    padding-left: 1px;
    font-weight: normal;
    color: #909090;
}
.panel-menu {
    flex: 1;
    display: flex;
    justify-content: flex-end;
    align-items: center;
    padding-right: 6px;
    border-bottom: 1px solid #141414;
    color: #808080;
}
.panel-menu svg {
    width: 14px;
    height: 8px;
}
.end {
    width: 11px;
    border-left: 1px solid #141414;
    border-bottom: 1px solid #141414;
}
.swatch {
    display: block;
    flex: none;
    width: 10px;
    height: 10px;
    border: 1px solid #333;
}
.red { background: #b93a3c; }
.lavender { background: #aba7cc; }
.sand { background: #a99a79; }
.tan { background: #b09b78; }
.yellow { background: #e4d84e; }
.line {
    width: 1px;
    height: 11px;
    background: #303030;
}

/* project */
.effect-tab {
    width: 189px;
    gap: 24px;
    padding-left: 10px;
}
.preview-info {
    display: flex;
    gap: 5px;
    padding: 7px 5px;
    height: 107px;
}
.thumb {
    width: 60px;
    height: 60px;
}
.preview-info .down {
    margin: 0 1px 1px;
    color: #fff;
}
.project > .search {
    margin: 0 6px 8px;
}
.files {
    flex: 1;
    min-height: 0;
    display: grid;
    grid-template-columns: 1fr 16px;
    border-top: 1px solid #222;
}
table {
    width: 100%;
    align-self: start;
    border-collapse: collapse;
    table-layout: fixed;
}
th {
    height: 17px;
    padding: 0 0 0 5px;
    font-size: 9px;
    font-weight: normal;
    text-align: left;
    white-space: nowrap;
    background: linear-gradient(#4a4a4a, #3c3c3c);
    border-bottom: 1px solid #1c1c1c;
    border-right: 1px solid #303030;
}
th.c-name {
    width: 109px;
    padding-left: 20px;
}
th .up {
    width: 11px;
    margin-left: 51px;
    background: #999;
}
th.c-tag {
    width: 20px;
    padding: 0 1px;
}
th.c-type { width: 73px; }
th.c-size { width: 44px; }
td {
    height: 18px;
    padding: 0 0 0 6px;
    border-bottom: 1px solid #383838;
    white-space: nowrap;
}
tr.on td {
    background: #4c4c4c;
}
td.c-name {
    padding: 0;
}
td.c-name div {
    display: flex;
    align-items: center;
    padding-left: 4px;
}
td svg {
    width: 16px;
    height: 12px;
    margin: 0 1px 0 5px;
}
td.c-name span {
    flex: 1;
    padding-left: 1px;
}
tr.on td.c-name span {
    background: #b9b9b9;
    color: #111;
    font-size: 10px;
    font-weight: bold;
    line-height: 17px;
}
.vscroll {
    display: flex;
    flex-direction: column;
    align-items: center;
    padding: 4px 0;
    border-left: 1px solid #222;
    border-right: 1px solid #222;
    background: #3e3e3e;
    color: #6a6a6a;
}
.vscroll .up, .vscroll .down {
    width: 9px;
    height: 6px;
}
.vscroll span {
    flex: 1;
}
.files .vscroll {
    margin-top: 15px;
    padding-top: 2px;
}
.files .tree {
    height: 15px;
    width: 14px;
    margin-bottom: 6px;
    color: #c0c0c0;
}
.project-foot {
    display: flex;
    align-items: center;
    height: 17px;
    gap: 7px;
    padding-left: 4px;
    border-top: 1px solid #2a2a2a;
    white-space: nowrap;
}
.project-foot svg {
    width: 16px;
    height: 12px;
}
.project-foot .trash {
    height: 14px;
    margin-left: 10px;
}
.hscroll {
    display: flex;
    align-items: center;
    height: 15px;
    padding: 0 5px;
    border-left: 1px solid #222;
    border-right: 1px solid #222;
    background: #3e3e3e;
}
.project-foot .hscroll {
    flex: 1;
    margin-right: 15px;
}
.hscroll b {
    width: 33px;
    height: 15px;
    margin-left: 8px;
    border: 1px solid #1c1c1c;
    background: #464646;
}
.hscroll .twirl {
    width: 6px;
    height: 9px;
    margin-left: auto;
    background: #6a6a6a;
}

/* composition viewer */
.unlock {
    width: 12px;
    height: 12px;
}
.comp .grip {
    margin-right: 2px;
}
.comp-pick {
    display: flex;
    align-items: center;
    gap: 4px;
    height: 15px;
    padding: 0 4px;
    border: 1px solid #333;
}
.comp-pick .line {
    margin-left: 3px;
}
.crumb {
    height: 25px;
    padding: 4px 0 0 17px;
    border-bottom: 1px solid #222;
}
.crumb button {
    height: 15px;
    padding: 0 8px;
    border: 1px solid #303030;
    color: #707070;
}
.viewer {
    flex: 1;
    display: flex;
    justify-content: center;
    padding: 2px 0 4px;
}
.canvas {
    position: relative;
    width: 600px;
    background: #1a1a1a;
}
.handle {
    position: absolute;
    width: 6px;
    height: 6px;
    background: #c23c3c;
    transform: translate(-50%, -50%);
}
.nw { left: 0; top: 1px; }
.n { left: 50%; top: 1px; }
.ne { left: 100%; top: 1px; }
.w { left: 0; top: 50%; }
.e { left: 100%; top: 50%; }
.sw { left: 0; top: 100%; }
.se { left: 100%; top: 100%; }
.anchor {
    position: absolute;
    left: 50%;
    top: 50%;
    width: 13px;
    height: 13px;
    transform: translate(-50%, -50%);
}
.comp-foot {
    display: flex;
    align-items: center;
    gap: 7px;
    height: 21px;
    padding-left: 4px;
    border-top: 1px solid #303030;
    color: #6c6c6c;
}
.comp-foot svg {
    width: 14px;
    height: 12px;
}
.comp-foot .select {
    width: 60px;
    height: 16px;
    border-color: #303030;
    background: #424242;
}
.comp-foot .time {
    height: 16px;
    padding: 0 5px;
    font-size: 10px;
    border: 1px solid #303030;
}
.exposure {
    display: flex;
    align-items: center;
    gap: 5px;
    margin-left: auto;
    margin-right: 103px;
}
.exposure a {
    color: #7c7c7c;
    font-size: 10px;
    text-decoration: none;
    border-bottom: 1px dotted #7c7c7c;
}

/* right side */
.side {
    display: flex;
    flex-direction: column;
    gap: 3px;
    min-height: 0;
}
.info {
    height: 127px;
    flex: none;
}
.audio-tab {
    width: 55px;
    padding-left: 10px;
}
.readout {
    display: flex;
    margin: 6px 7px 0 5px;
    height: 55px;
    border-bottom: 1px solid #222;
    color: #6a6a6a;
    font-size: 10px;
}
.pixel {
    width: 19px;
    height: 19px;
    margin: 11px 5px 0 0;
    background: #1a1a1a;
    border: 1px solid #333;
}
.readout dl {
    display: grid;
    grid-template-columns: 18px 46px;
    align-content: start;
    height: 48px;
    border-right: 2px solid #303030;
}
.readout dl.xy {
    border: 0;
}
.cross {
    width: 9px;
    height: 9px;
    margin: 18px 6px 0 6px;
}
.transport {
    display: flex;
    justify-content: space-between;
    align-items: center;
    height: 27px;
    padding: 0 4px 0 8px;
    color: #808080;
}
.transport svg {
    width: 14px;
    height: 11px;
}
.sliver {
    flex: none;
    height: 4px;
    margin-right: 20px;
    background: #444;
    border-top: 1px solid #555;
}
.effects {
    flex: 1;
}
.character-tab {
    padding-left: 7px;
    padding-right: 0;
    font-size: 10px;
    border-right: 0;
}
.effects > .search {
    flex: none;
    margin: 4px 6px 2px 5px;
}
.effect-list {
    flex: 1;
    min-height: 0;
    display: grid;
    grid-template-columns: 1fr 16px;
    border-top: 1px solid #222;
}
.effect-list ul {
    list-style: none;
    overflow: hidden;
}
.effect-list li {
    display: flex;
    align-items: center;
    gap: 4px;
    height: 16px;
    padding-left: 5px;
    border-bottom: 1px solid #3a3a3a;
}
.effect-list .vscroll b {
    width: 14px;
    height: 52px;
    margin-top: 8px;
    background: #464646;
    border: 1px solid #1c1c1c;
}
.effects-foot {
    display: flex;
    justify-content: flex-end;
    align-items: center;
    height: 17px;
    flex: none;
    padding-right: 22px;
    border-top: 1px solid #222;
}
.effects-foot svg {
    width: 12px;
    height: 12px;
}

/* timeline */
.timeline {
    grid-column: span 2;
}
.timeline .tab {
    padding-left: 9px;
}
.timeline-body {
    flex: 1;
    min-height: 0;
    display: grid;
    grid-template-columns: 49fr 49fr 16px;
}
.layers, .graph, .gutter {
    display: flex;
    flex-direction: column;
    min-width: 0;
    overflow: hidden;
}
.layers-top {
    display: flex;
    align-items: center;
    height: 34px;
    flex: none;
    padding: 0 4px 0 9px;
}
.clock {
    width: 90px;
    color: #c8941a;
}
.clock strong {
    display: inline-block;
    font-size: 14px;
    line-height: 14px;
    border-bottom: 1px dotted #c8941a;
}
.clock small {
    display: block;
    padding-left: 2px;
    font-size: 9px;
}
.layers-top .search {
    width: 213px;
    flex: none;
}
.switches {
    display: flex;
    gap: 6px;
    margin-left: 12px;
}
.switches svg {
    width: 18px;
    height: 16px;
}
.switches svg:first-child {
    width: 22px;
    margin-right: 5px;
}
.switches svg:nth-child(2), .switches svg:nth-child(5) {
    margin-right: 8px;
}
.row {
    display: grid;
    grid-template-columns: 61px 37px 26px 121px 66px 22px 62px 1fr;
    align-items: center;
    height: 16px;
    flex: none;
    padding-left: 3px;
    border-bottom: 1px solid #383838;
}
.row.on {
    background: #4c4c4c;
}
.row.head {
    height: 18px;
    font-size: 9px;
    border-top: 1px solid #222;
    border-bottom: 1px solid #1c1c1c;
    background: linear-gradient(#4a4a4a, #3a3a3a);
}
.row .av, .row .tagcol, .row .src, .row .parent {
    display: flex;
    align-items: center;
}
.head .av {
    gap: 2px;
}
.head .av svg, .cell svg {
    width: 12px;
    height: 10px;
}
.head .tagcol svg {
    width: 15px;
    height: 13px;
}
.head .t {
    padding-left: 8px;
}
.head .src {
    padding-left: 2px;
}
.row b {
    font-size: 10px;
}
.row .tagcol {
    gap: 7px;
    padding-left: 4px;
}
.row.head .tagcol {
    padding-left: 12px;
}
.cell {
    display: grid;
    place-items: center;
    width: 13px;
    height: 14px;
    border-right: 1px solid #333;
    border-bottom: 1px solid #888;
    margin-right: 1px;
}
.cell:first-child {
    border-right: 0;
}
.cell.solo {
    margin-left: 15px;
}
.cell.t {
    margin-left: 5px;
    border-left: 1px solid #333;
}
.solid {
    width: 13px;
    height: 13px;
    margin-right: 1px;
    background: #1a1a1a;
    border: 1px solid #2a2a2a;
}
.solid.black {
    background: #0a0a0a;
}
.row .src svg {
    width: 13px;
    height: 10px;
    margin-right: 1px;
}
.row .src strong {
    flex: 1;
    padding-left: 3px;
    margin-right: 3px;
    line-height: 15px;
}
.row.on .src strong {
    background: #b9b9b9;
    color: #222;
}
.row .parent {
    gap: 5px;
    padding-left: 9px;
}
.row .parent svg {
    width: 12px;
    height: 12px;
}
.parent .select {
    width: 86px;
}
.layers-foot {
    display: flex;
    align-items: center;
    gap: 3px;
    height: 16px;
    margin-top: auto;
    padding-left: 4px;
    border-top: 1px solid #303030;
}
.layers-foot svg {
    width: 14px;
    height: 13px;
}
.layers-foot .pressed {
    background: #222;
}
.layers-foot button {
    width: 152px;
    height: 14px;
    margin-left: 193px;
    font-size: 10px;
    border: 1px solid #1c1c1c;
    background: linear-gradient(#505050, #404040);
}
.navigator, .work-area {
    position: relative;
    flex: none;
    height: 10px;
    margin: 6px 0 0;
    background: #858585;
    border: 1px solid #111;
}
.navigator i, .work-area i {
    position: absolute;
    right: 0;
    top: 0;
    width: 6px;
    height: 100%;
    background: #d9a61c;
    border-left: 1px solid #111;
}
.navigator i {
    border-top-right-radius: 4px;
}
.ruler {
    display: flex;
    height: 17px;
    font-size: 9px;
    flex: none;
}
.ruler span {
    flex: 1;
    text-align: right;
    background: linear-gradient(#999, #999) right 6px bottom 0 / 1px 4px no-repeat;
}
.work-area {
    height: 15px;
    margin-top: 0;
}
.cached {
    height: 4px;
    flex: none;
    margin-right: 8px;
    background: #25c13c;
    border-bottom: 1px solid #222;
}
.lane {
    height: 16px;
    flex: none;
    padding-right: 8px;
    border-bottom: 1px solid #3a3a3a;
}
.bar {
    display: block;
    height: 100%;
    background: #505050;
}
.bar.glitch { background: #bc5557; }
.bar.logo { background: #80809e; }
.bar.bg { background: #873839; }
.lane.rest {
    flex: 1;
    min-height: 0;
}
.graph-foot {
    display: flex;
    align-items: flex-end;
    height: 16px;
    flex: none;
    border-top: 1px solid #303030;
}
.graph-foot svg {
    width: 16px;
    height: 6px;
    margin: 0 5px 3px;
}
.graph-foot .near {
    width: 9px;
    margin: 0 12px 3px 0;
}
.graph-foot input {
    width: 44px;
    height: 3px;
    margin: 0 6px 4px 0;
    background: #141414;
}
input[type="range"]::-webkit-slider-thumb {
    appearance: none;
    width: 7px;
    height: 9px;
    background: #505050;
    border: 1px solid #141414;
}
.graph-foot .hscroll {
    flex: 1;
}
.gutter {
    align-items: center;
    border-left: 1px solid #222;
}
.mark {
    width: 12px;
    height: 14px;
    margin-top: 34px;
    color: #8a8a8a;
}
.mark + svg {
    width: 14px;
    height: 15px;
    margin-top: 5px;
}
.gutter .vscroll {
    flex: 1;
    width: 100%;
    margin: 1px 0 16px;
    border: 1px solid #222;
}

/* paragraph */
.align-tab {
    width: 50px;
    padding-left: 9px;
}
.aligns {
    display: flex;
    gap: 5px;
    height: 30px;
    margin: 0 16px 0 5px;
    padding-top: 5px;
    border-bottom: 1px solid #303030;
    color: #6e6e6e;
}
.aligns button {
    width: 20px;
    height: 20px;
    display: grid;
    place-items: center;
}
.aligns svg {
    width: 14px;
    height: 12px;
}
.aligns .on {
    border: 1px solid #2c2c2c;
}
.aligns button:nth-child(4), .aligns button:last-child {
    margin-left: 4px;
}
.indents {
    display: grid;
    grid-template-columns: 67px 62px 1fr;
    row-gap: 4px;
    padding: 4px 0 0 5px;
    color: #6e6e6e;
}
.indents span {
    display: flex;
    gap: 3px;
}
.indents svg {
    width: 16px;
    height: 12px;
}
.indents u {
    text-decoration: none;
    border-bottom: 1px dotted #6e6e6e;
}

/* dialog */
.dialog {
    position: absolute;
    left: 501px;
    top: 381px;
    width: 421px;
    padding: 0 7px 7px;
    background: #64b4e6;
    outline: 1px solid #3a6c8c;
}
.dialog-title {
    display: flex;
    height: 28px;
}
.dialog-title h2 {
    flex: 1;
    padding-left: 28px;
    text-align: center;
    color: #1c3c50;
    font: 13px/28px "Open Sans", sans-serif;
}
.dialog-close {
    width: 28px;
    height: 19px;
    display: grid;
    place-items: center;
    background: #c94f51;
    color: #fff;
}
.dialog-close svg {
    width: 8px;
    height: 8px;
}
.dialog-body {
    display: flex;
    flex-direction: column;
    padding: 15px 14px 14px;
    background: #424242;
    border: 1px solid #3a4a54;
    line-height: 14px;
}
.name-row {
    display: flex;
    align-items: center;
    gap: 2px;
    margin-bottom: 23px;
}
.name-row input {
    flex: 1;
    min-width: 0;
    height: 17px;
    padding-left: 3px;
    font-size: 10px;
    background: #a0a0a0;
    border: 1px solid #111;
    color: #111;
}
.dialog-body label {
    display: flex;
    align-items: center;
    gap: 4px;
    white-space: nowrap;
}
.choice {
    height: 65px;
    padding-left: 18px;
}
.choice p {
    padding-left: 24px;
    font: 9px/10px Roboto, sans-serif;
    white-space: nowrap;
}
.choice.second {
    height: 44px;
}
input[type="radio"] {
    flex: none;
    width: 11px;
    height: 11px;
    border: 1px solid #222;
    border-radius: 50%;
    background: #484848;
}
input[type="radio"]:checked {
    background: radial-gradient(#ddd 0 1px, #333 2px);
    outline: 1px solid #c8941a;
}
.adjust {
    padding-left: 31px;
    margin-bottom: 8px;
}
.open-new {
    padding-left: 17px;
    margin-bottom: 22px;
}
.dialog-buttons {
    display: flex;
    justify-content: flex-end;
    gap: 10px;
}
.dialog-buttons button {
    width: 83px;
    height: 18px;
    font-size: 10px;
    border: 1px solid #1c1c1c;
    background: linear-gradient(#4e4e4e, #404040);
}
.dialog-buttons .ok {
    border: 2px solid #111;
}
```
